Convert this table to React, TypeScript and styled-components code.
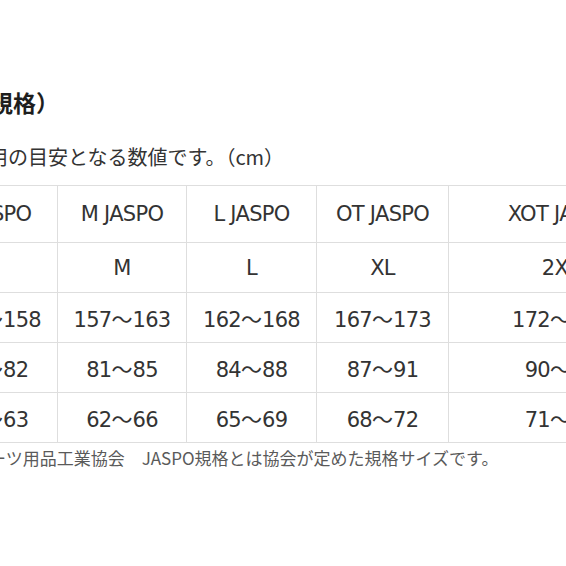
import React from "react";
import styled, { createGlobalStyle } from "styled-components";

const GlobalStyle = createGlobalStyle`
  html, body {
    margin: 0;
    padding: 0;
    background: #ffffff;
  }
`;

const Page = styled.div`
  width: 566px;
  height: 566px;
  overflow: hidden;
  background: #ffffff;
  padding-top: 87px;
  box-sizing: border-box;
`;

const Title = styled.h2`
  margin: 0 0 0 -10px;
  height: 30px;
  line-height: 30px;
  font-family: "Noto Sans CJK JP", sans-serif;
  font-size: 23px;
  font-weight: 700;
  color: #1e1e1e;
  white-space: nowrap;
`;

const Lead = styled.p`
  margin: 27px 0 0 -12px;
  height: 26px;
  line-height: 26px;
  font-family: "Noto Sans CJK JP", sans-serif;
  font-size: 20px;
  color: #333333;
  white-space: nowrap;
`;

const SizeTable = styled.table`
  margin: 15px 0 0 -73px;
  border-collapse: collapse;
  table-layout: fixed;
  width: 745px;
  font-family: "DejaVu Sans", "Liberation Sans", sans-serif;
  font-size: 21px;
  letter-spacing: -0.7px;
  color: #333333;
`;

const Cell = styled.td<{ $head?: boolean }>`
  height: ${(p) => (p.$head ? 56 : 49)}px;
  padding: 0;
  text-align: center;
  vertical-align: middle;
  border: 1px solid #dedede;
  white-space: nowrap;
  overflow: hidden;
`;

const Wave = styled.span`
  font-family: "Noto Sans CJK JP", sans-serif;
  letter-spacing: 0;
`;

const Note = styled.p`
  margin: 4px 0 0 -11px;
  height: 22px;
  line-height: 22px;
  font-family: "Noto Sans CJK JP", sans-serif;
  font-size: 17px;
  color: #5a5a5a;
  white-space: nowrap;
`;

const widths = [130, 129, 130, 132, 224];

const rows: string[][] = [
  ["S JASPO", "M JASPO", "L JASPO", "OT JASPO", "XOT JASPO"],
  ["S", "M", "L", "XL", "2XL"],
  ["152～158", "157～163", "162～168", "167～173", "172～178"],
  ["78～82", "81～85", "84～88", "87～91", "90～94"],
  ["59～63", "62～66", "65～69", "68～72", "71～75"],
];

const renderValue = (v: string) => {
  const parts = v.split("～");
  if (parts.length < 2) return v;
  return (
    <>
      {parts[0]}
      <Wave>～</Wave>
      {parts[1]}
    </>
  );
};

export default function App() {
  return (
    <>
      <GlobalStyle />
      <Page>
        <Title>規格）</Title>
        <Lead>用の目安となる数値です。（cm）</Lead>
        <SizeTable>
          <colgroup>
            {widths.map((w, i) => (
              <col key={i} style={{ width: w }} />
            ))}
          </colgroup>
          <tbody>
            {rows.map((row, r) => (
              <tr key={r}>
                {row.map((v, c) => (
                  <Cell key={c} $head={r === 0}>
                    {renderValue(v)}
                  </Cell>
                ))}
              </tr>
            ))}
          </tbody>
        </SizeTable>
        <Note>ーツ用品工業協会　JASPO規格とは協会が定めた規格サイズです。</Note>
      </Page>
    </>
  );
}
